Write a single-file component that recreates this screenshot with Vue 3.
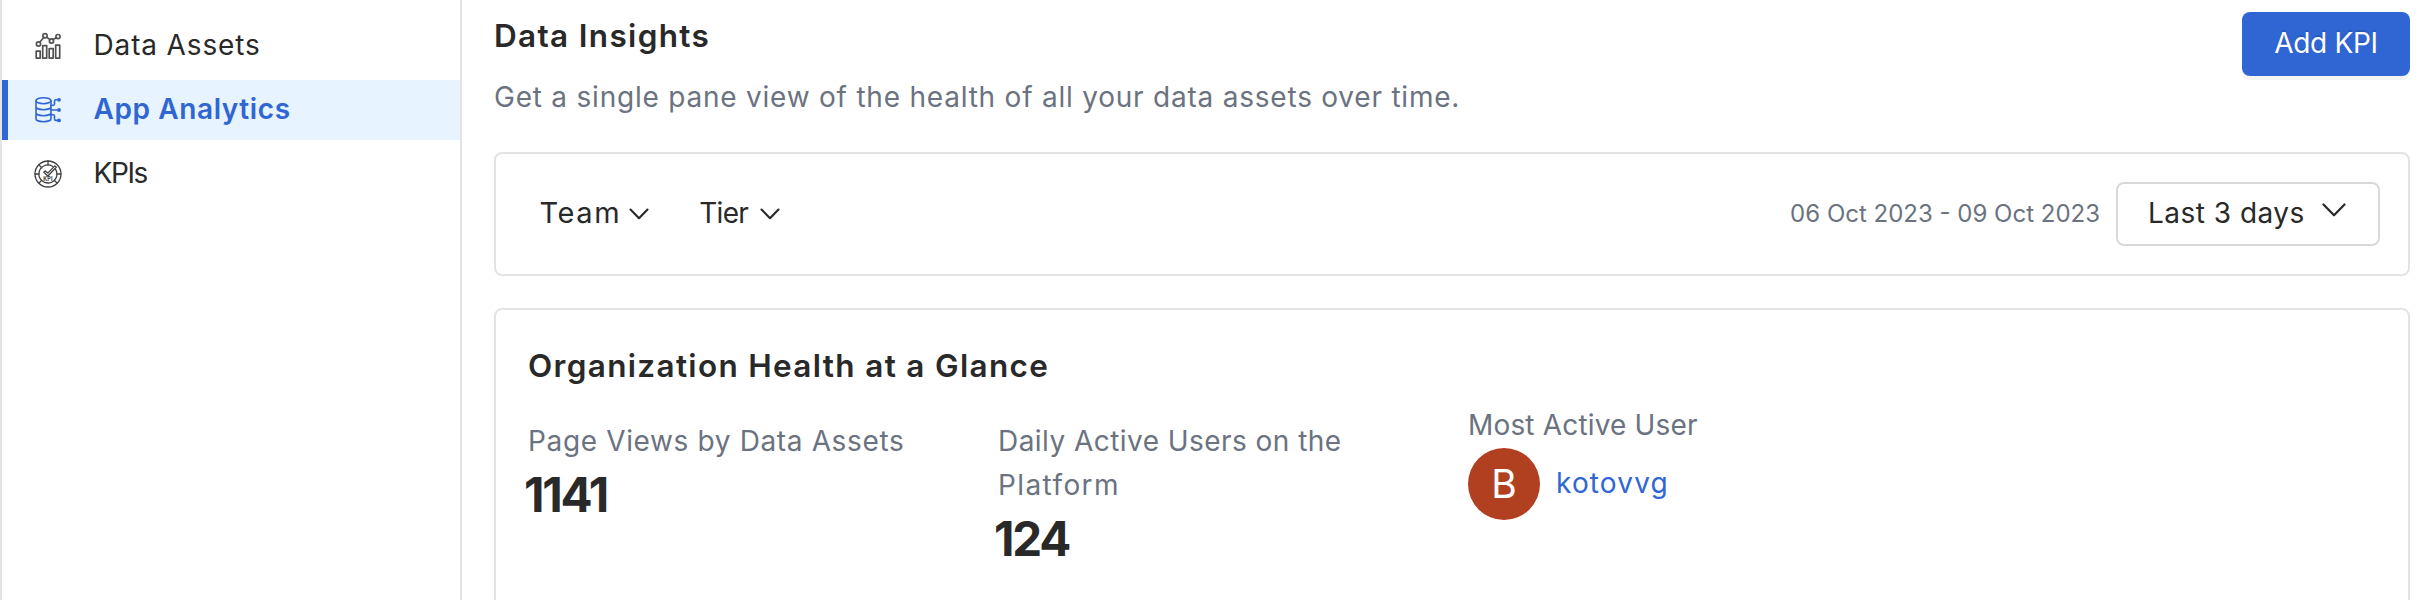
<script setup>
const menu = [
  { id: 'assets', label: 'Data Assets' },
  { id: 'app', label: 'App Analytics', active: true },
  { id: 'kpi', label: 'KPIs' },
]
</script>

<template>
  <div class="page">
    <nav class="sidebar">
      <a v-for="m in menu" :key="m.id" class="item" :class="[m.id, { active: m.active }]">
        <svg v-if="m.id === 'assets'" class="icon" viewBox="0 0 28 28">
          <circle cx="4.5" cy="12" r="2.1" /><circle cx="11" cy="3.8" r="2.1" />
          <circle cx="17.5" cy="9" r="2.1" /><circle cx="24" cy="4.6" r="2.1" />
          <path d="M5.8 10.2 9.7 5.5M12.7 5.1l3.2 2.6M19 7.6l3.4-1.9" />
          <path d="M2.2 26.1v-7h4v7zM8.7 26.1V13.6h4v12.5zM15.2 26.1v-9.5h4v9.5zM21.7 26.1V13.1h4v13z" />
        </svg>
        <svg v-else-if="m.id === 'app'" class="icon" viewBox="0 0 28 28">
          <ellipse cx="9.5" cy="4.7" rx="7.5" ry="3" />
          <path d="M2 4.7v18c0 1.7 3.4 3 7.5 3s7.5-1.3 7.5-3v-18M2 10.7c0 1.7 3.4 3 7.5 3s7.5-1.3 7.5-3M2 16.7c0 1.7 3.4 3 7.5 3s7.5-1.3 7.5-3" />
          <path d="M17 9.2h2.2q1.3 0 1.3-1.3V5.2q0-1.4 1.4-1.4H24M17 14h7M17 18.7h2.2q1.3 0 1.3 1.3v3q0 1.4 1.4 1.4H24" />
          <g class="dots"><circle cx="25" cy="3.8" r="1.9" /><circle cx="25" cy="14" r="1.9" /><circle cx="25" cy="24.4" r="1.9" /></g>
        </svg>
        <svg v-else class="icon thin" viewBox="0 0 28 28">
          <circle cx="14" cy="14" r="13" />
          <path d="M21.6 9.3A9 9 0 1 1 18.6 6.3" />
          <path d="M14 1v4M1 14h4M23 14h4M4.9 4.9l2.9 2.9M4.9 23.1l2.9-2.9M23.1 23.1l-2.9-2.9" />
          <path d="M9.8 12.2 11.3 10.9l2.5 2.2L20.8 5.9l1.5 1.4-8.5 8.700z" />
          <text x="14" y="21" text-anchor="middle">KPI</text>
        </svg>
        <span class="label">{{ m.label }}</span>
      </a>
    </nav>

    <main class="main">
      <header class="head">
        <div>
          <h1 class="title">Data Insights</h1>
          <p class="sub">Get a single pane view of the health of all your data assets over time.</p>
        </div>
        <button class="add"><span>Add KPI</span></button>
      </header>

      <section class="card filters">
        <div class="drop team"><span>Team</span><svg viewBox="0 0 20 12"><path d="M1.5 1.5 10 10.2 18.5 1.5" /></svg></div>
        <div class="drop tier"><span>Tier</span><svg viewBox="0 0 20 12"><path d="M1.5 1.5 10 10.2 18.5 1.5" /></svg></div>
        <span class="range">06 Oct 2023 - 09 Oct 2023</span>
        <button class="select"><span>Last 3 days</span><svg viewBox="0 0 24 14"><path d="M1.5 1.5 12 12.3 22.5 1.5" /></svg></button>
      </section>

      <section class="card health">
        <h2 class="title">Organization Health at a Glance</h2>
        <div class="stats">
          <div class="stat low">
            <p class="name views">Page Views by Data Assets</p>
            <p class="value">1141</p>
          </div>
          <div class="stat low">
            <p class="name daily">Daily Active Users on the <span class="plat">Platform</span></p>
            <p class="value">124</p>
          </div>
          <div class="stat">
            <p class="name most">Most Active User</p>
            <div class="user"><span class="avatar">B</span><a class="link">kotovvg</a></div>
          </div>
        </div>
      </section>
    </main>
  </div>
</template>

<style>
body { background: #fff; }
</style>

<style scoped>
.page { display: flex; height: 600px; overflow: hidden; box-sizing: border-box; font: 400 28px/44px Inter, "Open Sans", sans-serif; color: #292929; }
.page * { box-sizing: border-box; }
h1, h2, p { margin: 0; }
svg { fill: none; flex: none; stroke: currentColor; stroke-linecap: round; stroke-linejoin: round; }
button { font: inherit; padding: 0; }

.sidebar { width: 462px; flex: none; border-left: 2px solid #e3e3e3; border-right: 2px solid #e3e3e3; padding-top: 16px; display: flex; flex-direction: column; gap: 4px; }
.item { height: 60px; display: flex; align-items: center; border-left: 6px solid transparent; padding-left: 26px; letter-spacing: .86px; }
.item.active { background: #e7f3fe; border-color: #2f66d4; color: #2f66d4; font-weight: 600; letter-spacing: .6px; }
.item.kpi { letter-spacing: -1.4px; }
.label { margin-left: 31.5px; padding-bottom: 2px; }
.icon { width: 28px; height: 28px; stroke-width: 1.7; color: #515151; }
.active .icon { color: #2f66d4; stroke-width: 1.6; }
.icon.thin { stroke-width: 1.3; color: #404040; }
.dots { fill: currentColor; stroke: none; }
.icon text { font: 700 5.5px Inter, sans-serif; letter-spacing: .2px; fill: currentColor; stroke: none; }

.main { flex: 1; padding: 12px 18px 0 32px; display: flex; flex-direction: column; }
.head { display: flex; justify-content: space-between; align-items: flex-start; height: 140px; flex: none; }
.title { font-size: 31.5px; line-height: 48px; font-weight: 600; letter-spacing: 1.33px; }
.sub { margin-top: 15px; color: #6b7280; letter-spacing: .78px; }
.add { width: 168px; height: 64px; border: 0; border-radius: 8px; background: #2f66d4; color: #fff; box-shadow: 0 4px 0 rgba(0, 0, 0, .045); text-shadow: 0 -2px 0 rgba(0, 0, 0, .12); letter-spacing: -.3px; }
.add span { display: block; padding-bottom: 2px; }

.card { border: 2px solid #e3e3e3; border-radius: 8px; flex: none; }
.filters { height: 124px; display: flex; align-items: center; padding: 0 28px 0 43.5px; }
.drop { display: flex; align-items: center; }
.drop span { padding-bottom: 2px; }
.drop svg { width: 20px; height: 12px; stroke-width: 2.1; }
.team { font-size: 29px; letter-spacing: 1.6px; }
.team svg { margin-left: 8px; }
.tier { letter-spacing: -.7px; margin-left: 50px; }
.tier svg { margin-left: 12px; }
.range { margin-left: auto; margin-right: 16px; font-size: 24px; color: #6b7280; letter-spacing: 0; }
.select { width: 264px; height: 64px; border: 2px solid #d9d9d9; border-radius: 8px; background: #fff; color: inherit; display: flex; align-items: center; justify-content: space-between; padding: 0 32px 0 30px; letter-spacing: .48px; }
.select span { padding-bottom: 2px; }
.select svg { width: 24px; height: 14px; stroke-width: 2.2; margin-bottom: 9px; }

.health { margin-top: 32px; height: 330px; padding: 32px 32px 0; }
.stats { display: grid; grid-template-columns: 470px 470px 470px; margin-top: 13px; }
.low { padding-top: 16px; }
.name { width: 400px; color: #6b7280; }
.views { letter-spacing: .64px; }
.daily { letter-spacing: .45px; }
.plat { letter-spacing: 1.4px; }
.most { letter-spacing: .17px; }
.value { margin: 2px 0 0 -4px; font-size: 47.5px; line-height: 60px; font-weight: 650; letter-spacing: -2.2px; }
.user { display: flex; align-items: center; gap: 16px; margin-top: 1px; }
.avatar { width: 72px; height: 72px; border-radius: 50%; background: #b04020; color: #fff; display: flex; align-items: center; justify-content: center; font-size: 39px; }
.link { color: #2f66d4; letter-spacing: 1.150px; padding-bottom: 2px; }
</style>
